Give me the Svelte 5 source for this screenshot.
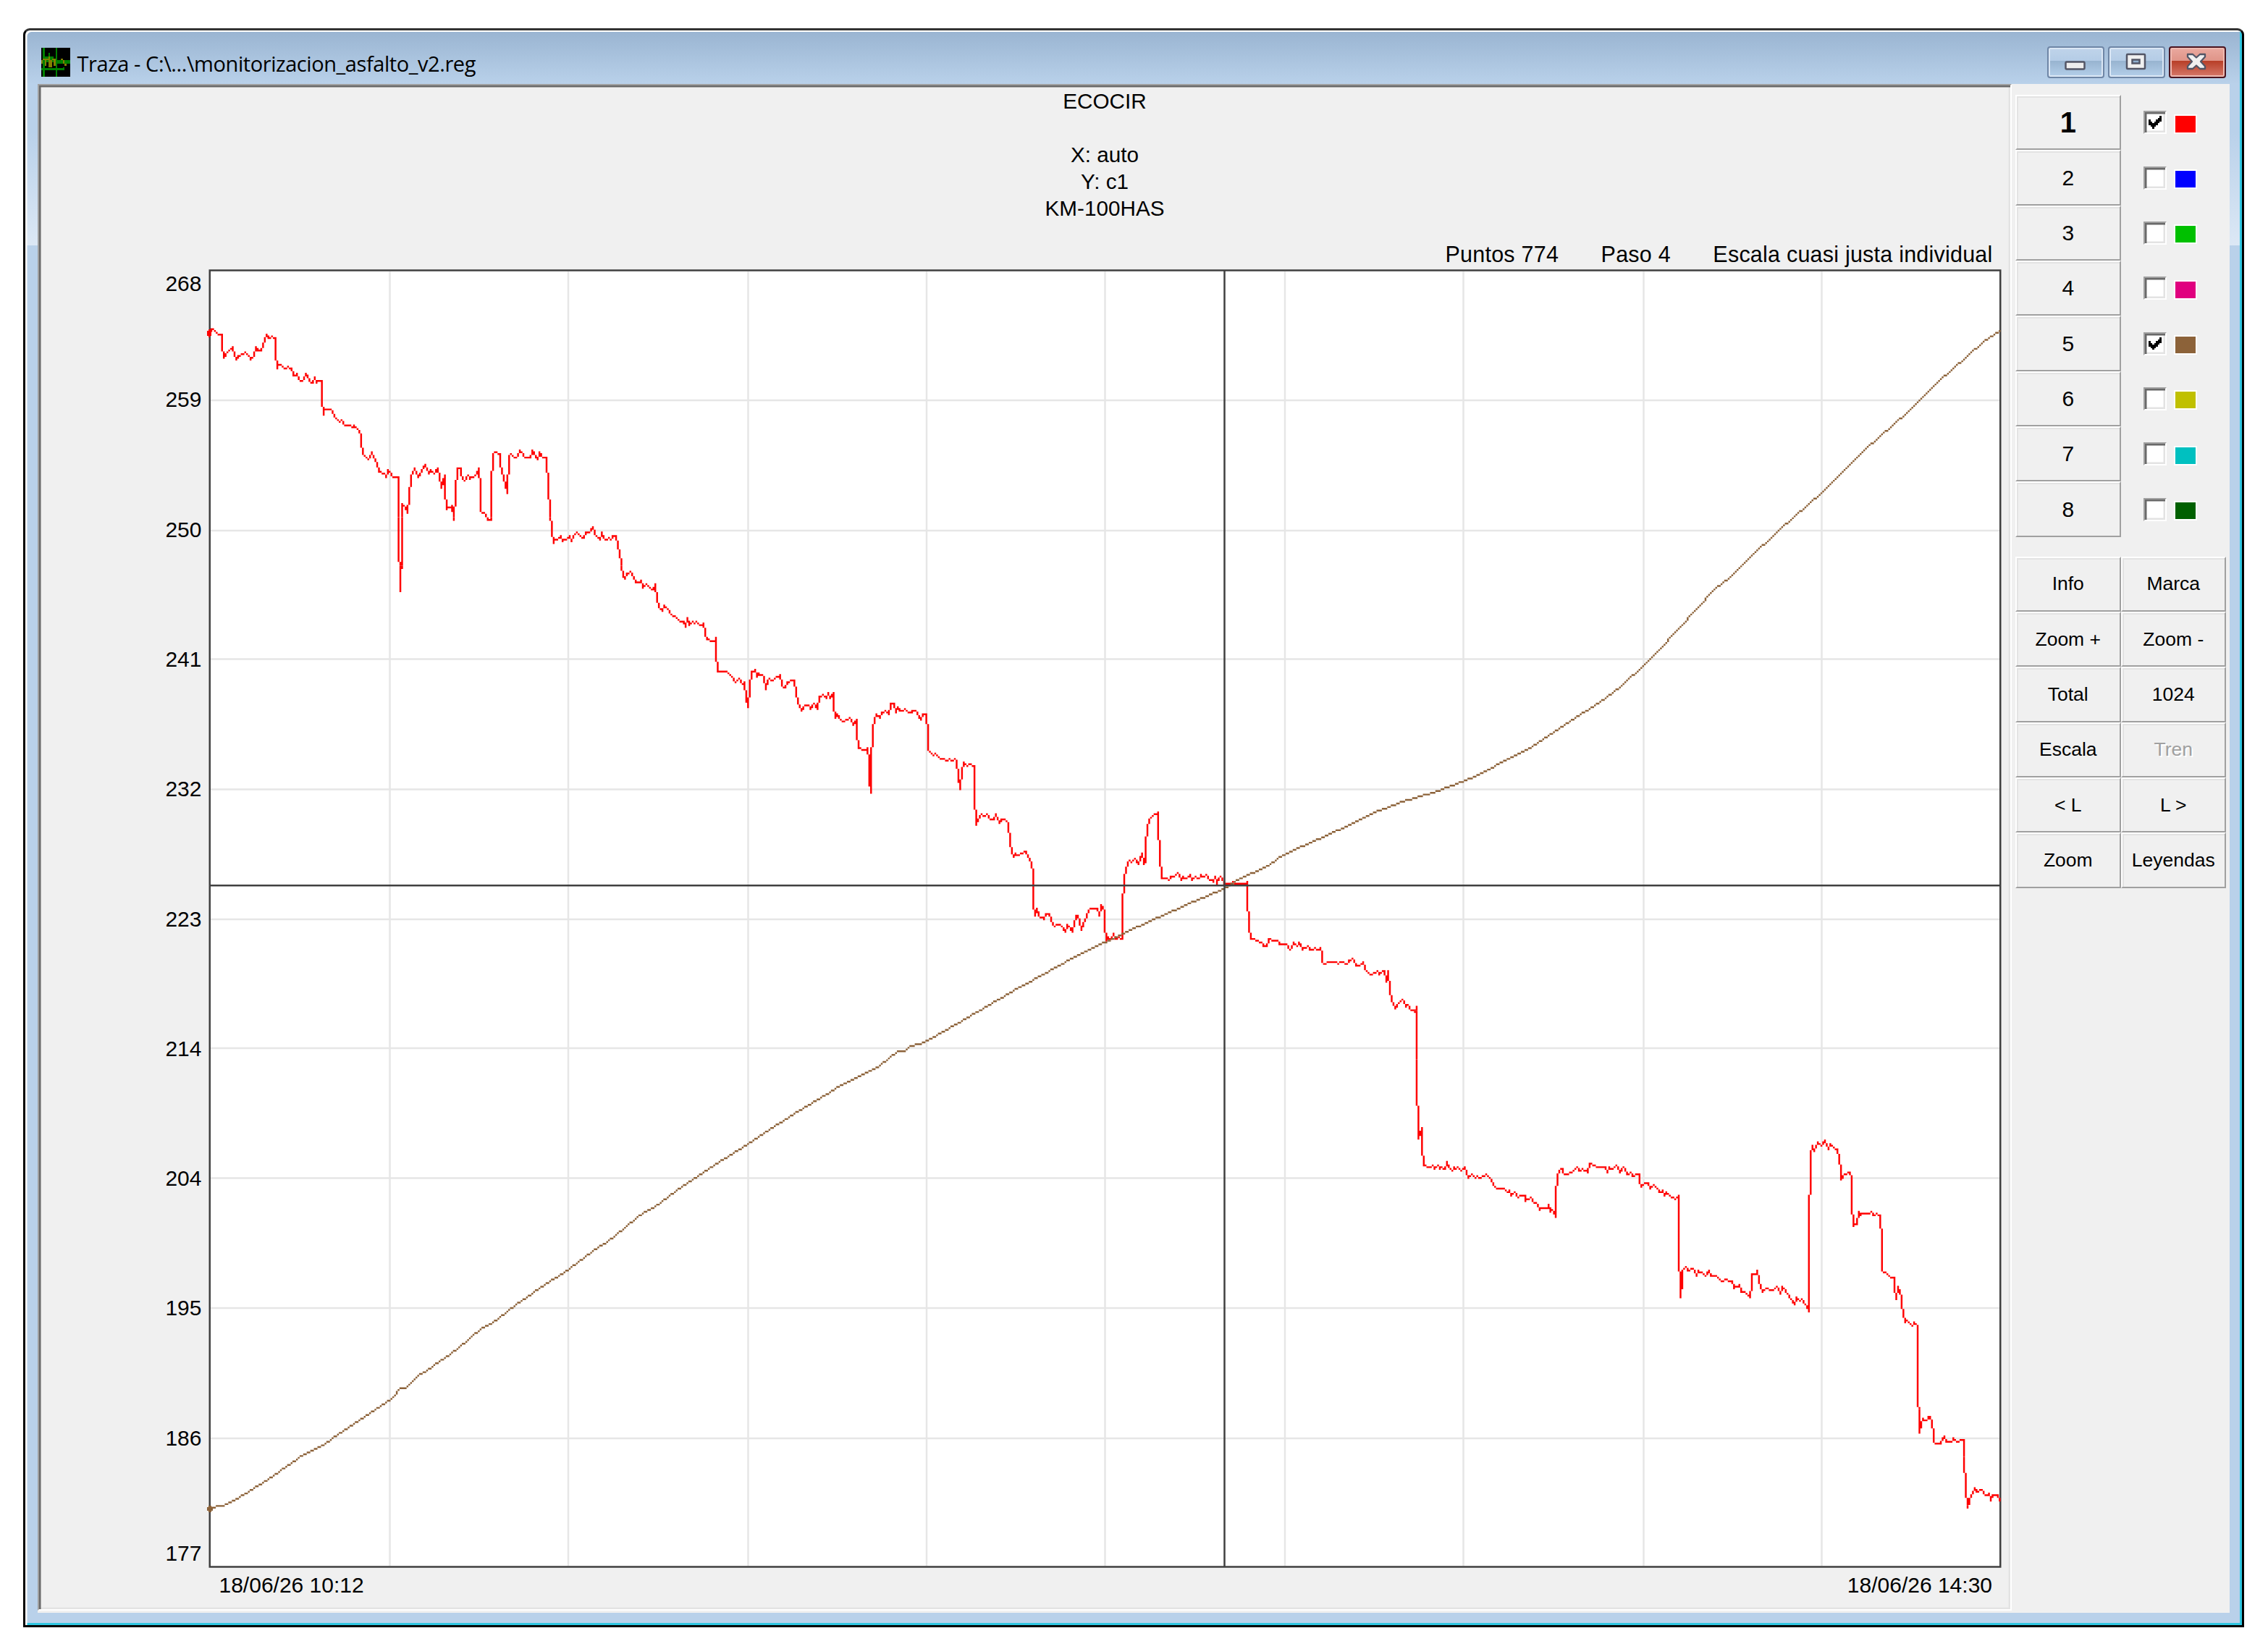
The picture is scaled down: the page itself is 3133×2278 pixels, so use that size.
<script>
  let channels = $state([
    { id: 1, color: '#ff0000', on: true },
    { id: 2, color: '#0000ff', on: false },
    { id: 3, color: '#00c000', on: false },
    { id: 4, color: '#e0007f', on: false },
    { id: 5, color: '#8c6239', on: true },
    { id: 6, color: '#c0c000', on: false },
    { id: 7, color: '#00c0c0', on: false },
    { id: 8, color: '#006000', on: false },
  ]);
  let active = $state(1);

  const actions = ['Info', 'Marca', 'Zoom +', 'Zoom -', 'Total', '1024', 'Escala', 'Tren', '< L', 'L >', 'Zoom', 'Leyendas'];
  const header = ['ECOCIR', '', 'X: auto', 'Y: c1', 'KM-100HAS'];

  // y axis: label value and centre of the label
  const yLabels = [
    [268, 391], [259, 551], [250, 731], [241, 910], [232, 1089], [223, 1269],
    [214, 1448], [204, 1627], [195, 1806], [186, 1986], [177, 2145],
  ];
  const gridX = [538.5, 785, 1033.5, 1280, 1526.5, 1775, 2021.5, 2270.5, 2516.5];
  const gridY = [553, 733, 910.5, 1090.5, 1270, 1448, 1627.5, 1807, 1987];

  const trace1 = `289,460 292,455 295,454 298,458 303,461 307,463 307,480 309,494 313,487 321,479 323,492 326,497 329,492 338,486 343,491
    346,497 351,492 354,479 357,484 362,484 363,476 366,466 368,462 371,467 376,464 380,466 381,487 383,509 384,504 389,504 393,509
    397,506 403,509 405,519 410,516 413,523 418,527 423,516 427,525 433,529 435,521 437,529 440,526 444,527 445,552 447,573 448,566
    458,566 463,576 470,583 472,580 476,587 485,587 489,591 490,588 495,593 499,599 499,613 502,626 508,634 514,624 520,641 523,651
    530,654 533,659 536,649 543,659 551,660 551,738 553,817 555,756 555,695 560,701 563,709 565,683 568,658 573,646 578,659 583,650
    588,641 593,654 595,649 600,654 605,646 606,660 610,675 614,656 615,679 617,704 624,698 627,719 630,680 632,648 636,647 638,657
    642,665 647,657 649,661 657,657 662,646 663,677 664,706 670,709 674,718 679,719 679,673 682,626 684,625 691,627 692,643 696,662
    701,682 703,629 706,627 711,632 716,629 718,622 725,632 733,632 735,622 743,635 745,624 750,631 756,632 758,677 763,732 765,751
    766,745 770,745 775,740 777,748 787,740 790,749 792,741 798,735 801,741 807,743 809,735 814,735 819,727 821,737 829,746 832,735
    835,743 839,746 842,743 844,746 846,740 850,741 854,755 857,763 859,781 862,796 864,800 867,793 871,789 876,797 879,804 885,804
    886,801 888,812 893,806 898,812 903,815 906,806 908,828 911,838 915,845 918,836 923,841 928,849 935,854 940,859 944,859 947,865
    950,855 952,864 957,858 960,862 962,858 965,861 970,864 972,861 975,877 977,883 983,886 988,883 989,881 990,904 992,928 1004,928
    1011,935 1016,942 1021,937 1027,945 1029,942 1031,966 1034,976 1036,947 1038,927 1044,925 1046,935 1048,930 1055,934 1059,953
    1061,939 1064,937 1069,940 1073,935 1078,932 1080,948 1085,950 1088,942 1093,940 1098,940 1100,958 1103,971 1105,978 1108,982
    1112,974 1118,975 1120,980 1124,972 1130,980 1132,961 1136,959 1142,965 1145,957 1147,965 1152,957 1152,976 1154,992 1157,987
    1161,994 1166,997 1174,991 1179,1002 1184,994 1184,1015 1186,1033 1194,1035 1199,1033 1200,1050 1201,1079 1204,1096 1204,1055
    1206,1006 1209,993 1211,987 1215,992 1218,984 1222,982 1228,987 1231,972 1236,972 1238,985 1241,977 1243,982 1248,982 1251,979
    1254,984 1259,984 1261,982 1266,982 1273,995 1275,987 1280,987 1281,1013 1283,1037 1290,1044 1293,1041 1299,1048 1305,1048
    1307,1052 1311,1048 1315,1051 1318,1048 1321,1050 1324,1073 1327,1091 1329,1062 1332,1053 1336,1059 1339,1055 1346,1057
    1347,1099 1349,1140 1351,1133 1353,1128 1356,1124 1359,1128 1364,1125 1369,1132 1372,1132 1376,1124 1381,1138 1384,1133
    1388,1132 1393,1138 1396,1163 1398,1179 1401,1185 1402,1179 1408,1182 1411,1179 1417,1176 1419,1183 1425,1190 1427,1210
    1428,1247 1430,1266 1432,1255 1435,1265 1442,1270 1445,1263 1450,1263 1454,1278 1457,1280 1460,1278 1465,1278 1472,1288
    1474,1278 1482,1288 1487,1265 1489,1265 1494,1285 1497,1275 1500,1272 1502,1262 1506,1255 1516,1255 1519,1266 1521,1250
    1526,1259 1527,1281 1529,1300 1530,1295 1536,1297 1538,1289 1541,1297 1546,1295 1551,1298 1551,1257 1554,1210 1556,1200
    1559,1190 1561,1188 1563,1191 1568,1186 1573,1194 1578,1179 1580,1194 1583,1188 1583,1166 1586,1142 1588,1132 1592,1127
    1596,1124 1600,1122 1600,1138 1603,1183 1605,1213 1613,1214 1615,1216 1618,1211 1623,1212 1627,1206 1630,1211 1632,1216
    1635,1211 1638,1213 1644,1208 1647,1217 1650,1213 1652,1211 1657,1213 1660,1208 1665,1212 1667,1208 1670,1213 1677,1218
    1679,1211 1682,1222 1683,1213 1687,1211 1691,1220 1693,1221 1702,1222 1704,1218 1707,1221 1722,1221 1724,1218 1724,1239
    1726,1279 1728,1298 1729,1294 1733,1296 1736,1299 1743,1301 1746,1308 1750,1307 1753,1297 1759,1300 1765,1299 1767,1305
    1778,1305 1782,1313 1787,1302 1792,1307 1795,1302 1800,1312 1802,1309 1807,1307 1809,1312 1815,1312 1817,1309 1819,1312
    1823,1309 1825,1310 1826,1318 1827,1328 1830,1332 1833,1329 1847,1329 1849,1332 1852,1329 1857,1329 1861,1332 1863,1327
    1868,1324 1873,1334 1879,1334 1884,1329 1886,1340 1893,1347 1902,1342 1906,1347 1910,1342 1913,1341 1916,1357 1918,1341
    1920,1369 1923,1380 1928,1392 1932,1386 1938,1381 1942,1390 1945,1388 1947,1393 1955,1398 1957,1391 1958,1483 1960,1574
    1962,1562 1965,1558 1965,1582 1967,1609 1973,1612 1977,1613 1980,1610 1982,1615 1987,1610 1990,1615 1992,1613 1997,1615
    1999,1605 2002,1613 2007,1618 2009,1613 2012,1615 2014,1613 2019,1617 2024,1612 2027,1622 2029,1628 2034,1623 2039,1628
    2041,1625 2045,1628 2053,1623 2061,1629 2064,1636 2067,1642 2073,1643 2078,1642 2083,1647 2086,1645 2088,1653 2093,1647
    2097,1655 2100,1652 2106,1652 2108,1660 2115,1655 2117,1659 2122,1661 2125,1666 2127,1672 2128,1669 2138,1669 2140,1664
    2142,1675 2145,1671 2147,1677 2150,1682 2150,1653 2152,1622 2156,1615 2159,1615 2160,1619 2165,1623 2168,1620 2173,1617
    2179,1613 2182,1617 2185,1615 2190,1617 2194,1620 2196,1607 2199,1607 2202,1610 2207,1612 2217,1612 2221,1620 2224,1612
    2228,1616 2233,1610 2237,1620 2243,1612 2248,1622 2252,1620 2256,1625 2260,1622 2265,1622 2266,1631 2268,1640 2272,1635
    2277,1635 2280,1642 2285,1637 2290,1642 2292,1647 2296,1645 2300,1652 2302,1647 2307,1652 2312,1655 2315,1657 2319,1652
    2320,1722 2322,1791 2324,1770 2324,1755 2329,1751 2332,1756 2338,1753 2344,1763 2346,1756 2351,1758 2357,1763 2361,1756
    2364,1762 2371,1763 2378,1771 2382,1767 2393,1771 2396,1780 2403,1775 2406,1785 2411,1785 2418,1791 2419,1775 2421,1760
    2425,1761 2428,1755 2431,1771 2433,1780 2435,1785 2440,1779 2450,1783 2454,1777 2458,1781 2460,1788 2462,1778 2469,1787
    2480,1801 2482,1792 2486,1797 2489,1794 2494,1801 2499,1813 2500,1705 2502,1592 2504,1582 2506,1591 2511,1578 2516,1583
    2518,1578 2521,1575 2527,1588 2529,1580 2537,1590 2539,1588 2541,1599 2542,1619 2543,1630 2547,1622 2553,1621 2556,1620
    2558,1627 2559,1663 2561,1694 2563,1691 2566,1692 2568,1674 2570,1679 2573,1677 2582,1677 2585,1674 2588,1679 2592,1677
    2598,1679 2599,1718 2601,1756 2607,1761 2612,1765 2618,1766 2618,1781 2620,1795 2622,1778 2626,1793 2628,1803 2630,1818
    2632,1827 2634,1824 2642,1832 2645,1827 2650,1831 2650,1907 2652,1980 2655,1964 2657,1960 2661,1962 2664,1957 2667,1958
    2669,1967 2670,1980 2672,1991 2676,1995 2682,1995 2684,1987 2687,1985 2689,1992 2696,1992 2699,1987 2704,1992 2711,1989
    2713,1990 2714,2011 2716,2057 2719,2084 2721,2073 2724,2065 2728,2056 2731,2061 2738,2059 2742,2066 2748,2063 2750,2073
    2753,2065 2759,2066 2763,2073`;

  const trace5 = `290,2084 307,2080 325,2072 370,2043 419,2010 442,1999 473,1976 505,1956 541,1933 554,1919 561,1917 581,1898 591,1893
    631,1863 667,1835 678,1829 714,1802 752,1774 786,1752 829,1721 838,1717 891,1675 903,1669 936,1645 986,1609 1033,1580 1062,1560
    1097,1539 1134,1516 1166,1497 1215,1471 1240,1453 1249,1452 1257,1446 1278,1439 1328,1411 1400,1368 1449,1342 1489,1319
    1525,1302 1551,1290 1572,1280 1600,1267 1650,1246 1690,1227 1713,1213 1747,1198 1773,1182 1800,1170 1848,1146 1894,1125
    1938,1107 1978,1094 2018,1081 2048,1067 2078,1051 2118,1031 2168,997 2218,965 2240,948 2272,919 2290,901 2318,868 2368,815
    2390,796 2418,771 2458,733 2518,679 2577,619 2637,569 2677,529 2717,491 2740,471 2762,457`;

  // The plot is drawn without smoothing on a grid of square dots
  const DOT = 2.463;
  const LEFT = 289.5;
  const TOP = 373.5;

  function plot(points) {
    const pts = points.trim().split(/\s+/).map(p => {
      const [x, y] = p.split(',').map(Number);
      return [Math.round((x - LEFT) / DOT), Math.round((y - TOP) / DOT)];
    });
    const dots = new Set();
    for (let i = 1; i < pts.length; i++) {
      const [x0, y0] = pts[i - 1];
      const [x1, y1] = pts[i];
      const steps = Math.max(Math.abs(x1 - x0), Math.abs(y1 - y0), 1);
      for (let s = 0; s <= steps; s++) {
        const x = Math.round(x0 + ((x1 - x0) * s) / steps);
        const y = Math.round(y0 + ((y1 - y0) * s) / steps);
        dots.add(`${x},${y}`);
      }
    }
    return [...dots]
      .map(d => {
        const [x, y] = d.split(',').map(Number);
        const px = (LEFT + (x - 0.5) * DOT).toFixed(2);
        const py = (TOP + (y - 0.5) * DOT).toFixed(2);
        return `M${px} ${py}h${DOT}v${DOT}h-${DOT}z`;
      })
      .join('');
  }

  const path1 = plot(trace1);
  const path5 = plot(trace5);
</script>

<div class="desktop">
  <div class="window">
    <header class="titlebar">
      <svg class="app-icon" viewBox="0 0 16 16" shape-rendering="crispEdges">
        <rect width="16" height="16" fill="#000" />
        <path d="M1 0h1v16h-1zM8 0h1v16h-1zM0 11.5h13v1h-13zM9 7h7v2h-7zM2 5h5v3h-5zM4 3h1v2h-1zM12 11h1v1h-1z" fill="#008000" />
        <path d="M0 7h1v2h-1zM1 6h3v1h-3zM4 5h1v6h-1zM5 7h1v4h-1zM6 6h2v1h-2zM7 7h1v3h-1zM2 7h1v3h-1zM11 6h1v1h-1zM12 7h1v2h-1zM13 9h1v1h-1z" fill="#808000" />
      </svg>
      <span class="title">Traza - C:\...\monitorizacion_asfalto_v2.reg</span>
      <div class="controls">
        <button class="ctl" aria-label="Minimizar">
          <svg viewBox="0 0 79 44"><rect x="25.5" y="21.5" width="26" height="10" rx="1.5" fill="#eee" stroke="#535666" stroke-width="2.5" /></svg>
        </button>
        <button class="ctl" aria-label="Maximizar">
          <svg viewBox="0 0 79 44">
            <rect x="26" y="11" width="25" height="20" rx="1" fill="#f0f0f0" stroke="#535666" stroke-width="2.5" />
            <rect x="33.5" y="18.5" width="10" height="5" fill="#8fb0d0" stroke="#535666" stroke-width="2.5" />
          </svg>
        </button>
        <button class="ctl close" aria-label="Cerrar">
          <svg viewBox="0 0 79 44">
            <path d="M26 11h7l5 4.5 5-4.5h7v3.500l-6 6.500 6 6.500v3.500h-7l-5-4.500-5 4.500h-7v-3.500l6-6.500-6-6.500z" fill="#f0f0f0" stroke="#535666" stroke-width="2.3" stroke-linejoin="round" />
          </svg>
        </button>
      </div>
    </header>

    <main class="client">
      <section class="panel">
        <div class="caption">
          {#each header as line}
            <div class="line">{line}</div>
          {/each}
        </div>
        <div class="status">
          <span>Puntos 774</span>
          <span>Paso 4</span>
          <span>Escala cuasi justa individual</span>
        </div>
        <svg class="chart" viewBox="57 370 2718 1850" width="2718" height="1850">
          <rect x="289.5" y="373.5" width="2473.5" height="1791" fill="#fff" />
          <g stroke="#e6e6e6" stroke-width="2.5">
            {#each gridX as x}
              <line x1={x} x2={x} y1="375" y2="2163" />
            {/each}
            {#each gridY as y}
              <line x1="291" x2="2762" y1={y} y2={y} />
            {/each}
          </g>
          <rect x="289.75" y="373.5" width="2473.5" height="1791" fill="none" stroke="#404040" stroke-width="2.5" />
          <path d={path1} fill="#ff0000" />
          <path d={path5} fill="#8c6239" />
          <path d="M286 457h2v-2h4v9h-2v2h-2v-2h-2z" fill="#ff0000" />
          <path d="M286 2082h2v-2h4v2h2v5h-2v2h-4v-2h-2z" fill="#8c6239" />
          <g stroke="#404040" stroke-width="2.5">
            <line x1="1691.5" x2="1691.5" y1="374" y2="2164" />
            <line x1="290" x2="2763" y1="1223.3" y2="1223.3" />
          </g>
          <g class="axis">
            {#each yLabels as [value, y]}
              <text x="278.5" y={y + 10.5} text-anchor="end">{value}</text>
            {/each}
            <text x="302.5" y="2200">18/06/26 10:12</text>
            <text x="2752" y="2200" text-anchor="end">18/06/26 14:30</text>
          </g>
        </svg>
      </section>

      <aside class="side">
        <div class="channels">
          {#each channels as ch}
            <div class="channel">
              <button class="btn num" class:active={ch.id === active} onclick={() => (active = ch.id)}>{ch.id}</button>
              <button class="check" aria-label="Canal {ch.id}" onclick={() => (ch.on = !ch.on)}>
                {#if ch.on}
                  <svg viewBox="0 0 7 7" shape-rendering="crispEdges">
                    <path d="M0 2h1v1h1v1h1v-1h1v-1h1v-1h1v-1h1v3h-1v1h-1v1h-1v1h-1v1h-1v-1h-1v-1h-1z" />
                  </svg>
                {/if}
              </button>
              <span class="swatch" style="background: {ch.color}"></span>
            </div>
          {/each}
        </div>
        <div class="actions">
          {#each actions as label}
            <button class="btn" disabled={label === 'Tren'}>{label}</button>
          {/each}
        </div>
      </aside>
    </main>
  </div>
</div>

<style>
  :global(body) {
    background: #fff;
  }

  .desktop {
    width: 3133px;
    height: 2278px;
    box-sizing: border-box;
    padding: 39px 33px 30px 32px;
    overflow: hidden;
    font-family: 'Liberation Sans', Arial, sans-serif;
    color: #000;
  }

  .window {
    height: 2209px;
    box-sizing: border-box;
    border: 3px solid #000;
    border-top-color: #333;
    border-radius: 9px 9px 0 0;
    box-shadow:
      inset 2.5px 2px #fff,
      inset -3px -3px #2fc6e0;
    background:
      linear-gradient(#99b4d1, #b9d1ea) 0 0 / 100% 74px no-repeat,
      linear-gradient(#b9d1ea 0, #b9d1ea 30%, #dce8f5 100%) 0 74px / 100% 223px no-repeat,
      #b9d1ea;
    padding: 2px 17px 17px 17px;
  }

  .titlebar {
    display: flex;
    align-items: flex-start;
    height: 72px;
    padding: 22px 5px 0;
    box-sizing: border-box;
  }

  .app-icon {
    width: 39.5px;
    height: 39.5px;
  }

  .title {
    margin-left: 10px;
    margin-top: 2px;
    font-family: 'Open Sans', 'Noto Sans', sans-serif;
    font-size: 29px;
    line-height: 40px;
    letter-spacing: -0.43px;
    white-space: nowrap;
  }

  .controls {
    display: flex;
    gap: 5px;
    margin-left: auto;
    margin-top: -2px;
  }

  .ctl {
    width: 79px;
    height: 44px;
    padding: 0;
    border: 2.5px solid #6f86a6;
    border-radius: 4px;
    box-shadow: inset 0 0 0 2px #dbe7f5;
    background: linear-gradient(#c0d4ea 0, #b4cce6 45%, #98b4d0 46%, #b4cfea 100%);
  }

  .ctl svg {
    display: block;
    width: 79px;
    height: 44px;
    margin: -2px;
  }

  .close {
    border-color: #4a1420;
    box-shadow: inset 0 0 0 2px #efb9b0;
    background: linear-gradient(#eaa99f 0, #df9488 45%, #b83f28 46%, #d6796a 100%);
  }

  .client {
    display: flex;
    height: 2112px;
    background: #f0f0f0;
  }

  .panel {
    width: 2727px;
    height: 2109px;
    box-sizing: border-box;
    border: 2.5px solid #a0a0a0;
    border-right-color: #fff;
    border-bottom-color: #fff;
    box-shadow:
      inset 2.5px 2.5px #696969,
      inset -2.5px -2.5px #e3e3e3;
    padding: 2.5px;
    display: flex;
    flex-direction: column;
    flex-shrink: 0;
  }

  .caption {
    height: 210px;
    padding-left: 221px;
    text-align: center;
    font-size: 29.7px;
  }

  .line {
    height: 37px;
    line-height: 38px;
  }

  .status {
    display: flex;
    justify-content: flex-end;
    height: 39px;
    padding-right: 22px;
    font-size: 30.5px;
    line-height: 40px;
    letter-spacing: 0.22px;
    gap: 58.5px;
    white-space: nowrap;
  }

  .chart {
    display: block;
    flex-shrink: 0;
  }

  .axis {
    font-size: 30px;
  }

  .side {
    flex: 1;
    padding: 15px 5px 0;
  }

  .channels {
    margin-bottom: 27px;
  }

  .channel {
    display: flex;
    align-items: center;
    height: 76.35px;
  }

  .btn {
    width: 145.5px;
    height: 76.35px;
    box-sizing: border-box;
    padding: 0;
    border: 2.5px solid #a0a0a0;
    border-top-color: #fff;
    border-left-color: #fff;
    box-shadow: inset 2px 2px #e3e3e3;
    background: #f0f0f0;
    font-family: inherit;
    font-size: 26.5px;
    color: #000;
    white-space: nowrap;
  }

  .btn:disabled {
    color: #a0a0a0;
    text-shadow: 2px 2px #fff;
  }

  .num {
    font-size: 30px;
  }

  .num.active {
    font-size: 40px;
    font-weight: bold;
  }

  .check {
    width: 32px;
    height: 32px;
    box-sizing: border-box;
    margin-left: 31.5px;
    padding: 5px;
    border: 2.5px solid #a0a0a0;
    border-right-color: #fff;
    border-bottom-color: #fff;
    box-shadow:
      inset 2.5px 2.5px #696969,
      inset -2.5px -2.5px #e3e3e3;
    background: #fff;
  }

  .check svg {
    display: block;
    width: 17.5px;
    height: 17.5px;
  }

  .swatch {
    width: 28px;
    height: 23px;
    margin: 4px 0 0 10px;
    border: 2px solid #fff;
  }

  .actions {
    display: grid;
    grid-template-columns: 145.5px 145.5px;
  }
</style>
